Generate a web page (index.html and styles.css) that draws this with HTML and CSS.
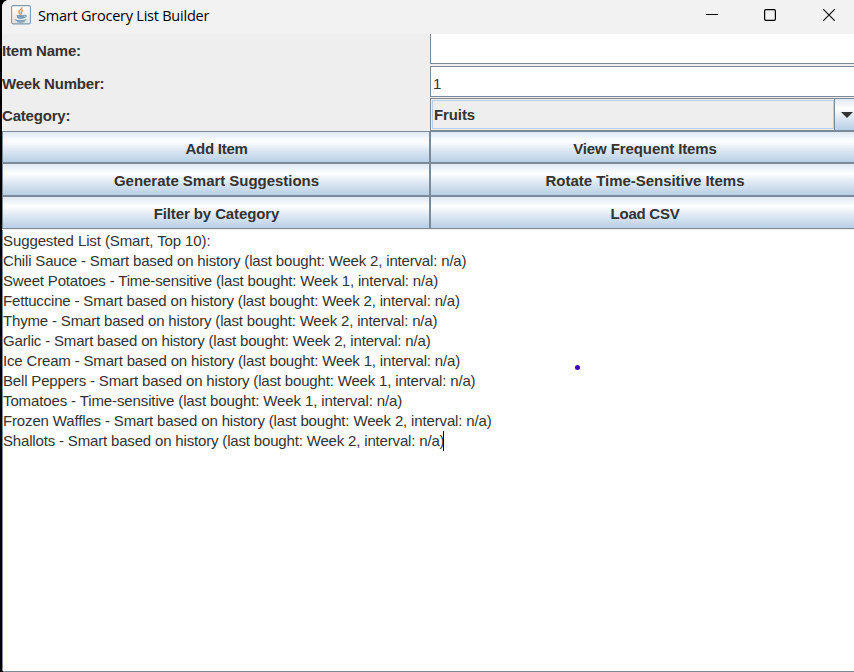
FILE: index.html
```html
<!DOCTYPE html>
<html lang="en">
<head>
<meta charset="utf-8">
<title>Smart Grocery List Builder</title>
<link rel="stylesheet" href="styles.css">
</head>
<body>
<div class="window">
  <header class="titlebar">
    <svg class="app-icon" width="20" height="20" viewBox="0 0 20 20">
      <defs><linearGradient id="g" x1="0" y1="0" x2="0" y2="1"><stop offset="0" stop-color="#fff"/><stop offset="1" stop-color="#dce4ea"/></linearGradient></defs>
      <rect x=".6" y=".6" width="18.8" height="18.3" rx="1.5" fill="url(#g)" stroke="#8299ac" stroke-width="1.1"/>
      <path d="M10.8 2.2c1 2-2.900 2.800-2.900 4.800 0 1.100 1 1.700 1.500 2.700M12 5.200c-2.600 1.300-1.600 2.400-1.400 4" fill="none" stroke="#ee9350" stroke-width="1.400"/>
      <path d="M5.500 10h8v1.800c0 1.500-1.300 2.200-3.800 2.200s-3.800-.7-3.800-2.200z" fill="#7d9fb9"/>
      <path d="M13.300 10.300c2.600-.5 2.700 1.800-.3 2.500M3.800 14.600c2 1.700 9.500 1.700 11.500 0M6 16.800c2 .5 5.500.5 7.500 0" fill="none" stroke="#6f94b1" stroke-width="1.100"/>
    </svg>
    <h1 class="title">Smart Grocery List Builder</h1>
    <div class="controls">
      <svg width="12" height="12" viewBox="0 0 12 12"><path d="M0 5.500h12" stroke="#000"/></svg>
      <svg width="12" height="12" viewBox="0 0 12 12"><rect x=".6" y=".6" width="10.800" height="10.800" rx="1.300" fill="none" stroke="#000" stroke-width="1.200"/></svg>
      <svg class="close" width="12" height="12" viewBox="0 0 12 12"><path d="M.3.300l11.400 11.400M11.700.300L.3 11.700" stroke="#111" stroke-width="1.200"/></svg>
    </div>
  </header>
  <main class="grid">
    <label class="label">Item Name:</label>
    <div class="field first"></div>
    <label class="label low">Week Number:</label>
    <div class="field">1</div>
    <label class="label low">Category:</label>
    <div class="combo">
      <div class="combo-value">Fruits</div>
      <div class="combo-arrow"><svg width="12" height="6" viewBox="0 0 12 6"><path d="M0 0h12L6 6z" fill="#333"/></svg></div>
    </div>
    <button class="button tight">Add Item</button>
    <button class="button">View Frequent Items</button>
    <button class="button wide">Generate Smart Suggestions</button>
    <button class="button wide">Rotate Time-Sensitive Items</button>
    <button class="button">Filter by Category</button>
    <button class="button tight">Load CSV</button>
  </main>
  <section class="output">
    <p>Suggested List (Smart, Top 10):</p>
    <p>Chili Sauce - Smart based on history (last bought: Week 2, interval: n/a)</p>
    <p>Sweet Potatoes - Time-sensitive (last bought: Week 1, interval: n/a)</p>
    <p>Fettuccine - Smart based on history (last bought: Week 2, interval: n/a)</p>
    <p>Thyme - Smart based on history (last bought: Week 2, interval: n/a)</p>
    <p>Garlic - Smart based on history (last bought: Week 2, interval: n/a)</p>
    <p>Ice Cream - Smart based on history (last bought: Week 1, interval: n/a)</p>
    <p>Bell Peppers - Smart based on history (last bought: Week 1, interval: n/a)</p>
    <p>Tomatoes - Time-sensitive (last bought: Week 1, interval: n/a)</p>
    <p>Frozen Waffles - Smart based on history (last bought: Week 2, interval: n/a)</p>
    <p>Shallots - Smart based on history (last bought: Week 2, interval: n/a)<span class="caret"></span></p>
  </section>
</div>
<span class="dot"></span>
</body>
</html>
```
FILE: styles.css
```css
* { box-sizing: border-box; }
body {
  margin: 0;
  height: 672px;
  padding-left: 2px;
  overflow: hidden;
  background: #000;
  color: #333;
  font-family: "Liberation Sans", Arial, sans-serif;
  font-size: 15px;
}
.window {
  display: flex;
  flex-direction: column;
  height: 672px;
  overflow: hidden;
  background: #eee;
  border-radius: 7px 0 0 4px;
}
.titlebar {
  display: flex;
  align-items: center;
  flex: none;
  height: 34px;
  padding: 0 19px 4px 9px;
  background: #f2f2f2;
}
.app-icon { margin-right: 7px; }
.title {
  margin: 2px 0 0;
  color: #000;
  font: 400 14.500px/20px "Open Sans", "Noto Sans", sans-serif;
  letter-spacing: -0.230px;
  white-space: nowrap;
}
.controls {
  display: flex;
  gap: 46px;
  margin-left: auto;
}
.controls .close { margin-left: 1px; }
.grid {
  display: grid;
  flex: none;
  grid-template-columns: 428px 429px;
  grid-template-rows: 32px 32px 33px 32px 33px 33px;
}
.label {
  line-height: 34px;
  font-weight: 700;
  letter-spacing: -0.200px;
}
.label.low { line-height: 36px; }
.field {
  height: 31px;
  padding-left: 2px;
  background: #fff;
  border: solid #7a8a99;
  border-width: 1px 0 1px 1px;
  line-height: 34px;
}
.field.first { height: 30px; border-top: 0; }
.combo {
  display: flex;
  height: 33px;
  border: 1px solid #7a8a99;
  border-right: 0;
  font-weight: 700;
}
.combo-value {
  flex: 1;
  margin: 1px 0 1px 1px;
  padding-left: 1px;
  border: 1px solid #b8cfe5;
  line-height: 28px;
  letter-spacing: -0.100px;
}
.combo-arrow {
  display: flex;
  align-items: center;
  justify-content: flex-end;
  width: 25px;
  padding-right: 6px;
  border-left: 1px solid #7a8a99;
  background: linear-gradient(#dde8f3, #fff 30%, #dde8f3 60%, #b8cfe5);
}
.button {
  padding: 2px 0 0 1px;
  border: 1px solid #7a8a99;
  border-radius: 0;
  background: linear-gradient(#dde8f3, #fff 30%, #dde8f3 60%, #b8cfe5);
  color: #333;
  font: inherit;
  font-weight: 700;
  letter-spacing: -0.100px;
}
.button.tight { letter-spacing: -0.250px; }
.button.wide { letter-spacing: -0.030px; }
.output {
  flex: 1;
  margin-top: 1px;
  padding-top: 1px;
  background: #fff;
  border-left: 1px solid #7a8a99;
  border-bottom: 1px solid #7a8a99;
}
.output p {
  margin: 0;
  line-height: 20px;
  letter-spacing: -0.170px;
  white-space: nowrap;
}
.output p:nth-child(1) { letter-spacing: -0.100px; }
.output p:nth-child(9) { letter-spacing: -0.120px; }
.output p:nth-child(10) { letter-spacing: -0.150px; }
.caret {
  display: inline-block;
  width: 1px;
  height: 20px;
  margin-left: -1px;
  background: #000;
  vertical-align: top;
}
.dot {
  position: absolute;
  left: 575px;
  top: 365px;
  width: 5px;
  height: 5px;
  border-radius: 50%;
  background: #3b00b8;
}
```
